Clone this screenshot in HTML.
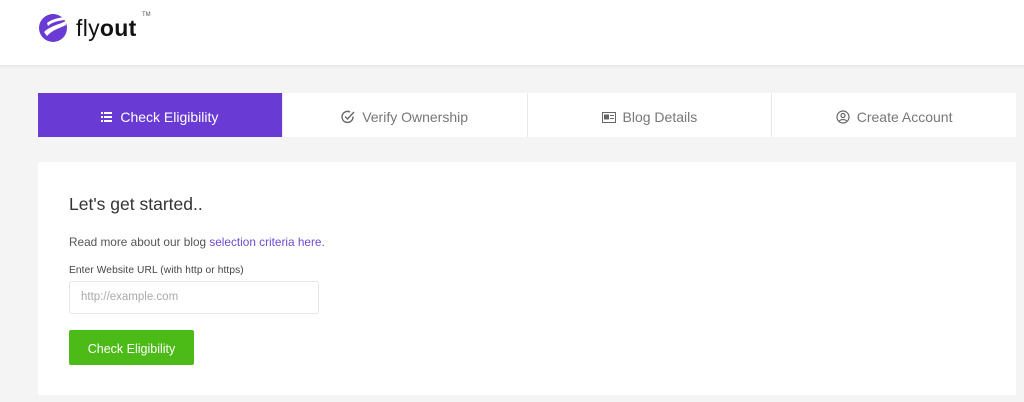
<!DOCTYPE html>
<html><head><meta charset="utf-8"><style>
*{margin:0;padding:0;box-sizing:border-box}
body{width:1024px;height:402px;background:#f4f4f4;font-family:"Liberation Sans",sans-serif;overflow:hidden;position:relative}
.hdr{position:absolute;left:0;top:0;width:1024px;height:65px;background:#fff;box-shadow:0 1px 3px rgba(0,0,0,.08)}
.logo{position:absolute;left:38px;top:12px}
.logotext{position:absolute;left:76px;top:15px;font-size:23px;color:#111;letter-spacing:0.3px}
.logotext b{font-weight:bold}
.tm{position:absolute;left:142px;top:12px;font-size:6px;color:#555}
.tabs{position:absolute;left:38px;top:93px;width:978px;height:44px;display:flex}
.tab{flex:1;background:#fff;border-right:1px solid #e8e8e8;display:flex;align-items:center;justify-content:center;font-size:14px;color:#777;gap:7px;padding-top:4px}
.tab:last-child{border-right:none}
.tab.a{background:#6a3bd4;color:#fff}
.card{position:absolute;left:38px;top:162px;width:978px;height:233px;background:#fff}
h1{position:absolute;left:31px;top:32px;font-size:17.5px;font-weight:normal;color:#333}
.p{position:absolute;left:31px;top:73px;font-size:11.8px;color:#555}
.p span{color:#7148d6}
.l{position:absolute;left:31px;top:103px;font-size:10.2px;color:#444;letter-spacing:0.1px}
.in{position:absolute;left:31px;top:119px;width:250px;height:33px;border:1px solid #e6e6e6;border-radius:3px;font-size:11.5px;color:#aaa;padding:9px 11px}
.btn{position:absolute;left:31px;top:168px;width:125px;height:35px;background:#4cbb17;border-radius:2px;color:#fff;font-size:12.5px;display:flex;align-items:center;justify-content:center;padding-top:2px}
</style></head><body>
<div class="hdr">
<svg class="logo" width="30" height="32" viewBox="0 0 30 32"><circle cx="15" cy="16" r="14" fill="#6a3bd4"/><path d="M6 20 C12 14 20 13 28 9 L28 13 C20 17 14 18 9 24 Z" fill="#fff"/><path d="M9 11 C14 7 20 6 27 5 L26 8 C20 9 14 10 10 14Z" fill="#fff"/></svg>
<div class="logotext">fly<b>out</b></div><div class="tm">TM</div>
</div>
<div class="tabs">
<div class="tab a"><svg width="12" height="11" viewBox="0 0 12 11" fill="#fff"><rect x="0" y="0" width="2" height="2"/><rect x="3" y="0" width="8" height="2"/><rect x="0" y="4" width="2" height="2"/><rect x="3" y="4" width="8" height="2"/><rect x="0" y="8" width="2" height="2"/><rect x="3" y="8" width="8" height="2"/></svg>Check Eligibility</div>
<div class="tab"><svg width="14" height="14" viewBox="0 0 14 14" fill="none" stroke="#666" stroke-width="1.4"><path d="M12 6.5A5.5 5.5 0 1 1 9 2"/><path d="M4 6.5l2.5 2.5L13 2"/></svg>Verify Ownership</div>
<div class="tab"><svg width="14" height="11" viewBox="0 0 14 11"><rect x=".5" y=".5" width="13" height="10" fill="none" stroke="#666"/><rect x="2" y="2.5" width="5" height="5" fill="#666"/><rect x="8" y="3" width="4" height="1" fill="#666"/><rect x="8" y="6" width="4" height="1" fill="#666"/></svg>Blog Details</div>
<div class="tab"><svg width="14" height="14" viewBox="0 0 14 14" fill="none" stroke="#666" stroke-width="1.2"><circle cx="7" cy="7" r="6"/><circle cx="7" cy="5.5" r="2"/><path d="M3.2 11.2C4.5 9 9.5 9 10.8 11.2"/></svg>Create Account</div>
</div>
<div class="card">
<h1>Let's get started..</h1>
<div class="p">Read more about our blog <span>selection criteria here.</span></div>
<div class="l">Enter Website URL (with http or https)</div>
<div class="in">http://example.com</div>
<div class="btn">Check Eligibility</div>
</div>
</body></html>
